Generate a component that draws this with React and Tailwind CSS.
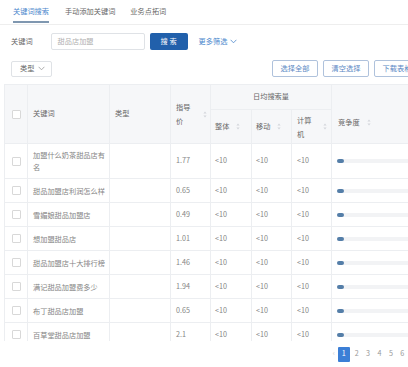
import React from "react";

const rows = [
  { k: ["加盟什么奶茶甜品店有", "名"], p: "1.77", tall: true },
  { k: ["甜品加盟店利润怎么样"], p: "0.65" },
  { k: ["雪媚娘甜品加盟店"], p: "0.49" },
  { k: ["想加盟甜品店"], p: "1.01" },
  { k: ["甜品加盟店十大排行榜"], p: "1.46" },
  { k: ["满记甜品加盟费多少"], p: "1.94" },
  { k: ["布丁甜品店加盟"], p: "0.65" },
  { k: ["百草堂甜品店加盟"], p: "2.1" },
];

const Sort = () => (
  <svg width="4" height="7" viewBox="0 0 4 7" className="shrink-0">
    <path d="M2 0.5L3.6 2.6H0.4Z" fill="#d3d6db" />
    <path d="M2 6.5L3.6 4.4H0.4Z" fill="#d3d6db" />
  </svg>
);

const Check = () => (
  <div className="w-[9px] h-[9px] border border-[#d8d8d8] rounded-[1px] bg-white mx-auto" />
);

const Chevron = ({ color = "#999" }) => (
  <svg width="7" height="5" viewBox="0 0 7 5" className="inline-block">
    <path d="M0.6 0.8L3.5 3.8L6.4 0.8" fill="none" stroke={color} strokeWidth="0.8" />
  </svg>
);

export default function App() {
  const bd = "border border-[#eceef1]";
  return (
    <div
      className="w-[408px] h-[367px] overflow-hidden bg-white text-[#858585] text-[7.2px] leading-none"
      style={{ fontFamily: '"Noto Sans CJK SC", "Noto Sans", sans-serif' }}
    >
      {/* tabs */}
      <div className="h-[25px] border-b border-[#eeeeee] flex items-stretch pl-[13px]">
        <div className="relative flex items-center text-[#4a86cc] w-[36px]">
          关键词搜索
          <div className="absolute left-0 right-0 bottom-[1px] h-[2px] bg-[#7f97b0]" />
        </div>
        <div className="flex items-center ml-[16px] text-[#666]">手动添加关键词</div>
        <div className="flex items-center ml-[15px] text-[#666]">业务点拓词</div>
      </div>

      {/* search row */}
      <div className="flex items-center h-[17px] mt-[8px] pl-[11px]">
        <span className="text-[#666]">关键词</span>
        <div className="ml-[18px] w-[94px] h-[17px] border border-[#dfe2e6] rounded-[2px] flex items-center pl-[6px] text-[#b0b0b0]">
          甜品店加盟
        </div>
        <div className="ml-[5px] w-[38px] h-[17px] bg-[#2160ab] rounded-[2px] flex items-center justify-center text-white">
          搜&nbsp;索
        </div>
        <div className="ml-[11px] flex items-center gap-[3px] text-[#4a86cc]">
          更多筛选 <Chevron color="#4a86cc" />
        </div>
      </div>

      {/* filter row */}
      <div className="flex items-center h-[17px] mt-[10px] pl-[11px]">
        <div className="w-[41px] h-[16px] border border-[#dfe2e6] rounded-[2px] flex items-center pl-[8px] gap-[4px] text-[#666]">
          类型 <Chevron />
        </div>
        <div className="ml-auto flex gap-[5px] mr-[-12px]">
          {["选择全部", "清空选择", "下载表格"].map((t) => (
            <div
              key={t}
              className="w-[46px] h-[17px] border border-[#afc2dc] rounded-[2px] flex items-center justify-center text-[#5b88c4] bg-white"
            >
              {t}
            </div>
          ))}
        </div>
      </div>

      {/* table */}
      <div className="mt-[7px] ml-[4px] h-[257px] overflow-hidden">
        <table className="border-collapse table-fixed w-[467px]">
          <colgroup>
            <col className="w-[23px]" />
            <col className="w-[82px]" />
            <col className="w-[61px]" />
            <col className="w-[40px]" />
            <col className="w-[41px]" />
            <col className="w-[40px]" />
            <col className="w-[40px]" />
            <col className="w-[140px]" />
          </colgroup>
          <thead className="bg-[#f6f7f9] text-[#666]">
            <tr className="h-[25px]">
              <th rowSpan={2} className={`${bd} font-normal`}>
                <Check />
              </th>
              <th rowSpan={2} className={`${bd} font-normal text-left pl-[5px]`}>
                关键词
              </th>
              <th rowSpan={2} className={`${bd} font-normal text-left pl-[5px]`}>
                类型
              </th>
              <th rowSpan={2} className={`${bd} font-normal text-left pl-[5px] pr-[3px]`}>
                <div className="flex items-center justify-between">
                  <span className="leading-[14px]">
                    指导
                    <br />价
                  </span>
                  <Sort />
                </div>
              </th>
              <th colSpan={3} className={`${bd} font-normal text-center`}>
                日均搜索量
              </th>
              <th rowSpan={2} className={`${bd} font-normal text-left pl-[6px] align-middle`}>
                <div className="flex items-center gap-[7px] pt-[18px]">
                  竞争度 <Sort />
                </div>
              </th>
            </tr>
            <tr className="h-[34px]">
              <th className={`${bd} font-normal text-left pl-[4px]`}>
                <div className="flex items-center gap-[7px]">
                  整体 <Sort />
                </div>
              </th>
              <th className={`${bd} font-normal text-left pl-[4px]`}>
                <div className="flex items-center gap-[7px]">
                  移动 <Sort />
                </div>
              </th>
              <th className={`${bd} font-normal text-left pl-[5px] pr-[4px]`}>
                <div className="flex items-center justify-between">
                  <span className="leading-[14px]">
                    计算
                    <br />机
                  </span>
                  <Sort />
                </div>
              </th>
            </tr>
          </thead>
          <tbody>
            {rows.map((r, i) => (
              <tr key={i} className={r.tall ? "h-[35px]" : "h-[24px]"}>
                <td className={bd}>
                  <Check />
                </td>
                <td className={`${bd} pl-[5px] leading-[12px]`}>
                  {r.k[0]}
                  {r.k[1] && (
                    <>
                      <br />
                      {r.k[1]}
                    </>
                  )}
                </td>
                <td className={bd}></td>
                <td className={`${bd} pl-[5px]`}>{r.p}</td>
                <td className={`${bd} pl-[4px]`}>&lt;10</td>
                <td className={`${bd} pl-[4px]`}>&lt;10</td>
                <td className={`${bd} pl-[5px]`}>&lt;10</td>
                <td className={`${bd} pl-[5px]`}>
                  <div className="h-[4px] bg-[#f2f3f5] rounded-full">
                    <div className="w-[7px] h-[4px] bg-[#547ea8] rounded-full" />
                  </div>
                </td>
              </tr>
            ))}
          </tbody>
        </table>
      </div>

      {/* pagination */}
      <div className="h-[26px] flex items-center pl-[330px] text-[#999]">
        <span className="w-[8px] text-center text-[#cccccc]">‹</span>
        <div className="w-[13px] h-[15px] bg-[#3c7fd6] rounded-[1px] text-white flex items-center justify-center">
          1
        </div>
        <span className="w-[12px] text-center ml-[1px]">2</span>
        <span className="w-[12px] text-center">3</span>
        <span className="w-[12px] text-center">4</span>
        <span className="w-[12px] text-center">5</span>
        <span className="w-[12px] text-center">6</span>
      </div>
    </div>
  );
}
